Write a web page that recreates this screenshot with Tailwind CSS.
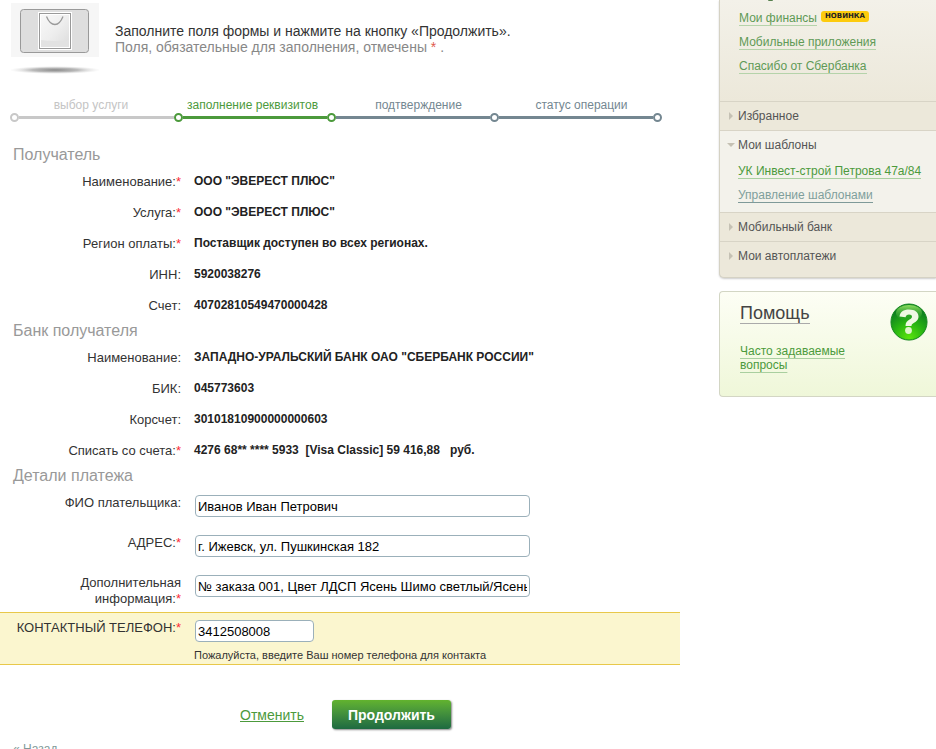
<!DOCTYPE html>
<html lang="ru">
<head>
<meta charset="utf-8">
<title>Оплата услуг</title>
<script src="https://cdn.jsdelivr.net/npm/@tailwindcss/browser@4"></script>
</head>
<body class="h-screen overflow-hidden bg-white font-['Liberation_Sans',Arial,sans-serif] text-[13px] leading-4 text-[#333]">
<div class="flex items-start gap-[39px]">
<main class="min-w-0 flex-1">
  <header class="flex gap-4 pt-[3px] pl-[11px]">
    <svg class="h-[72px] w-[88px] shrink-0" viewBox="0 0 88 72" aria-hidden="true">
      <defs>
        <radialGradient id="sh"><stop offset="0" stop-color="#888"/><stop offset=".5" stop-color="#aaa" stop-opacity=".8"/><stop offset="1" stop-color="#ddd" stop-opacity="0"/></radialGradient>
        <linearGradient id="bag" x2="1" y2="1"><stop offset="0" stop-color="#f8f8f8"/><stop offset=".5" stop-color="#eee"/><stop offset="1" stop-color="#dcdcdc"/></linearGradient>
      </defs>
      <rect width="88" height="54" fill="#f6f6f6"/>
      <rect x="9.500" y="6.500" width="68" height="43" rx="3" fill="#dedede" stroke="#999"/>
      <rect x="27" y="9" width="34" height="38" fill="#fff"/>
      <rect x="28.500" y="10.500" width="31" height="35" fill="#fff" stroke="#999"/>
      <rect x="30" y="12" width="28" height="32" fill="url(#bag)"/>
      <path d="M30 37q14 2 28 0v7H30z" fill="#e2e2e2"/>
      <path d="M35.500 13.500c2 5 5 8 8.500 8s6-3 8-8" fill="none" stroke="#999" stroke-width="1.300"/>
      <ellipse cx="44" cy="67" rx="46" ry="4" fill="url(#sh)"/>
    </svg>
    <div class="pt-5 text-[14px]">
      <p>Заполните поля формы и нажмите на кнопку «Продолжить».</p>
      <p class="text-[#888]">Поля, обязательные для заполнения, отмечены <span class="text-[#e05a4e]">*</span> .</p>
    </div>
  </header>

  <ol class="mt-[22px] mr-[18px] ml-[10px] flex text-center text-[12px]">
    <li class="flex-[164] text-[#c4c4c4]"><div class="pr-0.5">выбор услуги</div>
      <div class="flex items-center"><i class="size-[9px] rounded-full border-2 border-[#c8c8c8]"></i><i class="h-[3px] flex-1 bg-[#c8c8c8]"></i></div></li>
    <li class="flex-[153] text-[#4c9a3c]"><div class="pl-1 whitespace-nowrap">заполнение реквизитов</div>
      <div class="flex items-center"><i class="size-[9px] rounded-full border-2 border-[#4c9a3c]"></i><i class="h-[3px] flex-1 bg-[#4c9a3c]"></i></div></li>
    <li class="flex-[163] text-[#748791]"><div class="pl-5">подтверждение</div>
      <div class="flex items-center"><i class="size-[9px] rounded-full border-2 border-[#4c9a3c]"></i><i class="h-[3px] flex-1 bg-[#748791]"></i></div></li>
    <li class="flex-[163] text-[#748791]"><div class="pl-5">статус операции</div>
      <div class="flex items-center"><i class="size-[9px] rounded-full border-2 border-[#748791]"></i><i class="h-[3px] flex-1 bg-[#748791]"></i></div></li>
    <li class="w-[9px] pt-4"><i class="block size-[9px] rounded-full border-2 border-[#748791]"></i></li>
  </ol>

  <form class="mt-[23px]">
    <h2 class="h-[21px] pl-[13px] text-[16px] leading-[19px] text-[#999]">Получатель</h2>
    <dl>
      <div class="flex h-[31px] items-center gap-[13px]"><dt class="w-[181px] text-right">Наименование:<span class="text-red-500">*</span></dt><dd class="pb-0.5 text-[12px] font-bold text-[#222]">ООО "ЭВЕРЕСТ ПЛЮС"</dd></div>
      <div class="flex h-[31px] items-center gap-[13px]"><dt class="w-[181px] text-right">Услуга:<span class="text-red-500">*</span></dt><dd class="pb-0.5 text-[12px] font-bold text-[#222]">ООО "ЭВЕРЕСТ ПЛЮС"</dd></div>
      <div class="flex h-[31px] items-center gap-[13px]"><dt class="w-[181px] text-right">Регион оплаты:<span class="text-red-500">*</span></dt><dd class="pb-0.5 text-[12px] font-bold text-[#222]">Поставщик доступен во всех регионах.</dd></div>
      <div class="flex h-[31px] items-center gap-[13px]"><dt class="w-[181px] text-right">ИНН:</dt><dd class="pb-0.5 text-[12px] font-bold text-[#222]">5920038276</dd></div>
      <div class="flex h-[31px] items-center gap-[13px]"><dt class="w-[181px] text-right">Счет:</dt><dd class="pb-0.5 text-[12px] font-bold text-[#222]">40702810549470000428</dd></div>
    </dl>
    <h2 class="h-[21px] pl-[13px] text-[16px] leading-[19px] text-[#999]">Банк получателя</h2>
    <dl>
      <div class="flex h-[31px] items-center gap-[13px]"><dt class="w-[181px] text-right">Наименование:</dt><dd class="pb-0.5 text-[12px] font-bold text-[#222]">ЗАПАДНО-УРАЛЬСКИЙ БАНК ОАО "СБЕРБАНК РОССИИ"</dd></div>
      <div class="flex h-[31px] items-center gap-[13px]"><dt class="w-[181px] text-right">БИК:</dt><dd class="pb-0.5 text-[12px] font-bold text-[#222]">045773603</dd></div>
      <div class="flex h-[31px] items-center gap-[13px]"><dt class="w-[181px] text-right">Корсчет:</dt><dd class="pb-0.5 text-[12px] font-bold text-[#222]">30101810900000000603</dd></div>
      <div class="flex h-[31px] items-center gap-[13px]"><dt class="w-[181px] text-right">Списать со счета:<span class="text-red-500">*</span></dt><dd class="pb-0.5 text-[12px] font-bold whitespace-pre text-[#222]">4276 68** **** 5933  [Visa Classic] 59 416,88   руб.</dd></div>
    </dl>
    <h2 class="h-[21px] pl-[13px] text-[16px] leading-[19px] text-[#999]">Детали платежа</h2>
    <div class="flex h-10 gap-[14px] pt-2"><label for="fio" class="w-[181px] text-right">ФИО плательщика:</label><input id="fio" class="h-[22px] w-[335px] rounded-[4px] border border-[#9bb0ba] bg-white px-0.5 text-black" value="Иванов Иван Петрович"></div>
    <div class="flex h-10 gap-[14px] pt-2"><label for="addr" class="w-[181px] text-right">АДРЕС:<span class="text-red-500">*</span></label><input id="addr" class="h-[22px] w-[335px] rounded-[4px] border border-[#9bb0ba] bg-white px-0.5 text-black" value="г. Ижевск, ул. Пушкинская 182"></div>
    <div class="flex h-[45px] gap-[14px] pt-2"><label for="info" class="w-[181px] text-right">Дополнительная<br>информация:<span class="text-red-500">*</span></label><input id="info" class="h-[22px] w-[335px] rounded-[4px] border border-[#9bb0ba] bg-white px-0.5 text-black" value="№ заказа 001, Цвет ЛДСП Ясень Шимо светлый/Ясень Шимо темный"></div>
    <div class="flex h-[53px] gap-[13px] border-y border-[#e8c84a] bg-[#fbf6cf] pt-[7px]">
      <label for="phone" class="w-[181px] text-right">КОНТАКТНЫЙ ТЕЛЕФОН:<span class="text-red-500">*</span></label>
      <div><input id="phone" class="ml-px block h-[22px] w-[119px] rounded-[4px] border border-[#9bb0ba] bg-white px-0.5 text-black" value="3412508008"><p class="mt-[5px] text-[11px]">Пожалуйста, введите Ваш номер телефона для контакта</p></div>
    </div>
    <div class="mt-[35px] flex items-center gap-7 pl-60">
      <a href="#" class="text-[14px] text-[#4c9a3c] underline">Отменить</a>
      <button type="submit" class="h-[29px] w-[119px] rounded-[3px] bg-linear-to-b from-[#62b32e] to-[#1d6a40] text-[14px] font-bold text-white shadow-[1px_1px_2px_#888]">Продолжить</button>
    </div>
    <a href="#" class="mt-3 block pl-[13px] text-[12px] text-[#7f9a99]">« <span class="underline">Назад</span></a>
  </form>
</main>

<aside class="w-[217px] shrink-0 text-[12px]">
  <nav class="overflow-hidden rounded-bl-[5px] border-b border-l border-[#d5d2c4] bg-[#ece8da] shadow-[0_1px_2px_#ccc]">
    <div class="h-[101px] bg-linear-to-b from-[#f3f1e9] to-[#ece8da] pl-[19px] text-[#5f9a56]">
      <i class="ml-[29px] block h-px w-[5px] rounded-b bg-[#57804e]"></i>
      <div class="flex h-6 items-start gap-1 pt-[10px]"><a href="#" class="h-[15px] border-b border-[#b5d3aa] leading-[14px]">Мои финансы</a><span class="rounded-[3px] bg-[#fdcb0e] px-1 font-['DejaVu_Sans'] text-[7px] leading-[11px] font-bold text-[#222]">НОВИНКА</span></div>
      <div class="flex h-6 pt-[10px]"><a href="#" class="h-[15px] border-b border-[#b5d3aa] leading-[14px]">Мобильные приложения</a></div>
      <div class="flex h-6 pt-[10px]"><a href="#" class="h-[15px] border-b border-[#b5d3aa] leading-[14px]">Спасибо от Сбербанка</a></div>
    </div>
    <button type="button" class="flex h-[29px] w-full items-center gap-[5px] border-t border-[#d8d4c6] pl-[9px] text-[#555]"><svg class="h-2 w-1" viewBox="0 0 4 8"><path d="M0 0l4 4-4 4z" fill="#c5c1b4"/></svg>Избранное</button>
    <div class="h-[82px] border-t border-[#d8d4c6] bg-[#f3f2eb]">
      <button type="button" class="flex h-7 w-full items-center gap-[3px] pl-[7px] text-[#555]"><svg class="h-1 w-2" viewBox="0 0 8 4"><path d="M0 0h8l-4 4z" fill="#c5c1b4"/></svg>Мои шаблоны</button>
      <div class="flex h-6 pt-[5px] pl-[18px]"><a href="#" class="h-[15px] border-b border-[#a9cf9f] leading-[14px] whitespace-nowrap text-[#4c9a3c]">УК Инвест-строй Петрова 47а/84</a></div>
      <div class="flex h-6 pt-[5px] pl-[18px]"><a href="#" class="h-[15px] border-b border-[#7f9a99] leading-[14px] text-[#7f9f9c]">Управление шаблонами</a></div>
    </div>
    <button type="button" class="flex h-[29px] w-full items-center gap-[5px] border-t border-[#d8d4c6] pl-[9px] text-[#555]"><svg class="h-2 w-1" viewBox="0 0 4 8"><path d="M0 0l4 4-4 4z" fill="#c5c1b4"/></svg>Мобильный банк</button>
    <button type="button" class="flex h-9 w-full items-center gap-[5px] border-t border-[#d8d4c6] pb-2 pl-[9px] text-[#555]"><svg class="h-2 w-1" viewBox="0 0 4 8"><path d="M0 0l4 4-4 4z" fill="#c5c1b4"/></svg>Мои автоплатежи</button>
  </nav>
  <section class="mt-[13px] flex h-[106px] justify-between rounded-l-[4px] border border-r-0 border-[#d3d6c4] bg-linear-to-b from-[#fdfef5] to-[#eff7d9] pt-[11px] pr-2 pl-5">
    <div>
      <h2 class="w-fit border-b border-[#aaa] text-[18px] leading-5 text-[#444]">Помощь</h2>
      <a href="#" class="mt-5 block w-28 text-[#4c9a3c] underline decoration-[#a9cf9f] underline-offset-3 leading-[14px]">Часто задаваемые вопросы</a>
    </div>
    <svg class="h-[38px] w-[38px]" viewBox="0 0 38 38" aria-hidden="true">
      <defs><radialGradient id="g" cx=".5" cy=".95" r=".85"><stop offset="0" stop-color="#5be60d"/><stop offset=".5" stop-color="#29b512"/><stop offset="1" stop-color="#0b7a22"/></radialGradient>
      <linearGradient id="gl" x2="0" y2="1"><stop offset="0" stop-color="#8fe060"/><stop offset="1" stop-color="#2aa32a" stop-opacity=".1"/></linearGradient></defs>
      <circle cx="19" cy="19.500" r="18.500" fill="#dcebd0"/>
      <circle cx="19" cy="19" r="18" fill="url(#g)" stroke="#168a20"/>
      <ellipse cx="19" cy="10" rx="13" ry="8" fill="url(#gl)"/>
      <path d="M9.500 13.500C10 9 13.500 6.500 19 6.500c6 0 9.500 2.800 9.500 7 0 3.600-2.400 5.200-4.800 6.600-1.500.9-2.200 1.500-2.200 2.900h-6c0-3.600 1.500-5 4-6.500 1.500-.9 2.500-1.500 2.500-2.800 0-1.500-1.200-2.200-3-2.200-2 0-3 .9-3.400 2.800z" fill="#eff8e4"/>
      <circle cx="18.500" cy="27.500" r="3.400" fill="#dff5cc"/>
    </svg>
  </section>
</aside>
</div>
</body>
</html>
